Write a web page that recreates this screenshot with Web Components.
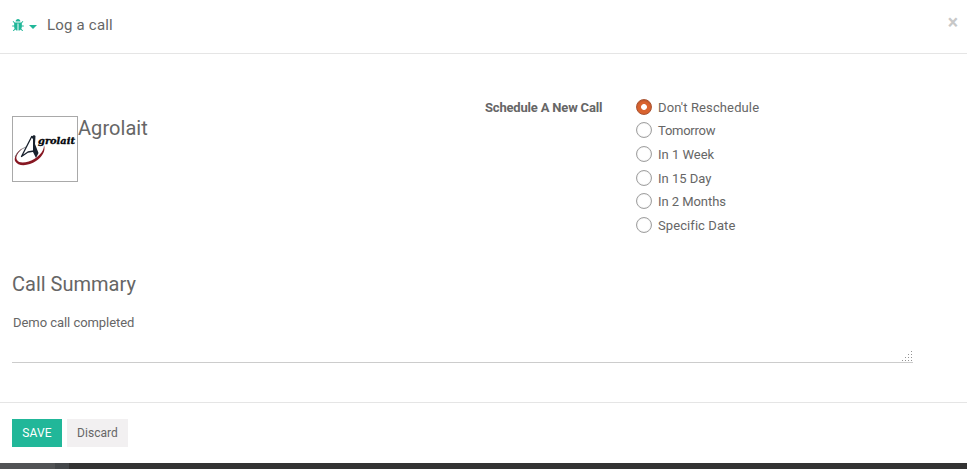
<!DOCTYPE html>
<html lang="en">
<head>
<meta charset="utf-8">
<title>Log a call</title>
<style>
  body { margin:0; height:469px; overflow:hidden; background:#333; color:#666; font:13px/18px Roboto, sans-serif; }
</style>
</head>
<body>
<call-dialog>
  <debug-menu slot="title"></debug-menu>
  <span slot="title">Log a call</span>
  <partner-card slot="left" name="Agrolait"></partner-card>
  <radio-group slot="right" label="Schedule A New Call">
    <radio-option checked style="letter-spacing:.12px">Don't Reschedule</radio-option>
    <radio-option style="letter-spacing:-.25px">Tomorrow</radio-option>
    <radio-option>In 1 Week</radio-option>
    <radio-option>In 15 Day</radio-option>
    <radio-option style="letter-spacing:-.06px">In 2 Months</radio-option>
    <radio-option style="letter-spacing:.08px">Specific Date</radio-option>
  </radio-group>
  <summary-field slot="summary" label="Call Summary">Demo call completed</summary-field>
  <action-button slot="footer" primary style="width:50px">SAVE</action-button>
  <action-button slot="footer" style="width:61px">Discard</action-button>
</call-dialog>
<page-backdrop></page-backdrop>

<script>
function define(name, html, setup) {
  const template = document.createElement('template');
  template.innerHTML = html;
  customElements.define(name, class extends HTMLElement {
    constructor() {
      super();
      this.attachShadow({mode:'open'}).appendChild(template.content.cloneNode(true));
    }
    connectedCallback() { if (setup) setup(this, this.shadowRoot); }
  });
}

// Modal frame: header, two column sheet, footer
define('call-dialog', `<style>
  :host { display:flex; flex-direction:column; height:463px; background:#fff; }
  header { box-sizing:border-box; height:54px; display:flex; justify-content:space-between; padding:15px 9px 0 12px; border-bottom:1px solid #e5e5e5; }
  .title { display:flex; gap:10px; font-size:15px; line-height:20px; letter-spacing:.2px; }
  button { align-self:flex-start; margin:-2px 0 0; padding:0; border:0; background:none; color:#c8c8c8; font:bold 19.5px/20px Roboto, sans-serif; }
  main { flex:1; padding:44px 12px 0; }
  .columns { display:grid; grid-template-columns:473px 1fr; height:174px; }
  footer { box-sizing:border-box; height:61px; display:flex; gap:5px; padding:16px 12px; border-top:1px solid #e5e5e5; }
</style>
<header><div class="title"><slot name="title"></slot></div><button aria-label="Close">×</button></header>
<main>
  <div class="columns"><slot name="left"></slot><slot name="right"></slot></div>
  <slot name="summary"></slot>
</main>
<footer><slot name="footer"></slot></footer>`);

define('debug-menu', `<style>
  :host { display:flex; gap:5px; color:#21b799; }
  svg { display:block; fill:currentColor; }
  .bug { width:12px; height:12px; margin-top:4px; }
  .caret { width:8px; height:4px; margin-top:10px; }
</style>
<svg class="bug" viewBox="32 0 1600 1536" preserveAspectRatio="none"><path d="M1632 896q0 26-19 45t-45 19h-224q0 171-67 290l208 209q19 19 19 45t-19 45q-18 19-45 19t-45-19l-198-197q-5 5-15 13t-42 28.5-65 36.5-82 29-97 13v-896h-128v896q-51 0-101.500-13.500t-87-33-66-39-43.500-32.500l-15-14-183 207q-20 21-48 21-24 0-43-17-19-18-20.500-44.500t15.500-46.500l202-227q-58-114-58-274h-224q-26 0-45-19t-19-45 19-45 45-19h224v-294l-173-173q-19-19-19-45t19-45 45-19 45 19l173 173h844l173-173q19-19 45-19t45 19 19 45-19 45l-173 173v294h224q26 0 45 19t19 45zm-480-576h-640q0-133 93.500-226.500t226.500-93.500 226.500 93.500 93.500 226.500z"/></svg>
<svg class="caret" viewBox="0 0 8 4"><path d="M0 0h8L4 4z"/></svg>`);

define('partner-card', `<style>
  :host { display:flex; align-items:flex-start; padding-top:18px; }
  svg { display:block; width:64px; height:64px; border:1px solid #a9a9a9; background:#fff; }
  h2 { margin:0; font-size:20px; line-height:24px; font-weight:400; letter-spacing:.05px; }
</style>
<svg viewBox="0 0 64 64">
  <path d="M10 31C3 35 1 41 2 44C5 50 16 49 23 44C29 40 33 34 31 28C31 34 27 38 22 41.500C15 46 6 47 4 43C2 40 5 35 10 31Z" fill="#871722"/>
  <path d="M13 30Q5 33 2 40" fill="none" stroke="#64656c" stroke-width=".7"/>
  <path d="M19 19L8.500 39.500L15 35L24 33.500" fill="none" stroke="#18212d" stroke-width="1.3" stroke-linejoin="round"/>
  <path d="M18 20L21 18L22.500 19L22 27L25.500 36L23 41L20 35L20 22Z" fill="#18212d"/>
  <text x="25" y="27" textLength="37" lengthAdjust="spacingAndGlyphs" font-family="DejaVu Serif, serif" font-size="8.5" font-weight="bold" font-style="italic" fill="#05070b" stroke="#05070b" stroke-width=".3">grolait</text>
</svg>
<h2></h2>`, (el, root) => { root.querySelector('h2').textContent = el.getAttribute('name'); });

define('radio-group', `<style>
  :host { display:grid; grid-template-columns:151px 1fr; align-items:start; padding-top:.8px; }
  b { line-height:18px; letter-spacing:-.18px; }
  .options { display:flex; flex-direction:column; }
</style>
<b></b><div class="options"><slot></slot></div>`, (el, root) => { root.querySelector('b').textContent = el.getAttribute('label'); });

define('radio-option', `<style>
  :host { display:flex; align-items:flex-start; gap:6px; height:23.6px; }
  i { box-sizing:border-box; width:16px; height:16px; border:1px solid #a0a0a0; border-radius:50%; background:#fff; box-shadow:inset 0 0 1px #bbb; }
  :host([checked]) i { border-color:#a95432; background:radial-gradient(circle, #fff 0 2.5px, #d9632f 3.3px); box-shadow:inset 0 1px 1px #b9552c; }
</style>
<i></i><span><slot></slot></span>`);

define('summary-field', `<style>
  :host { display:block; width:901px; }
  h2 { margin:0; font-size:20px; line-height:24px; font-weight:400; }
  .box { box-sizing:border-box; height:52px; margin-top:15px; padding:3px 1px 0; display:flex; justify-content:space-between; letter-spacing:-.05px; border-bottom:1px solid #ccc; }
  svg { align-self:flex-end; display:block; width:10px; height:10px; margin-bottom:1px; fill:#929292; }
</style>
<h2></h2>
<div class="box"><span><slot></slot></span>
  <svg viewBox="0 0 10 10" shape-rendering="crispEdges"><path d="M9 0h1v1h-1zM6 3h1v1h-1zM9 3h1v1h-1zM3 6h1v1h-1zM6 6h1v1h-1zM9 6h1v1h-1zM0 9h1v1h-1zM3 9h1v1h-1zM6 9h1v1h-1zM9 9h1v1h-1z"/></svg>
</div>`, (el, root) => { root.querySelector('h2').textContent = el.getAttribute('label'); });

define('action-button', `<style>
  :host { display:block; }
  button { width:100%; height:28px; padding:0; border:0; background:#f2f0f1; color:#666; font:12px/28px Roboto, sans-serif; letter-spacing:.05px; }
  :host([primary]) button { background:#21b799; color:#fff; letter-spacing:.2px; }
</style>
<button><slot></slot></button>`);

// Strip of the page left visible under the dialog
define('page-backdrop', `<style>
  :host { display:flex; height:6px; background:#333; }
  .side { width:55px; background:#515355; }
  .scroll { width:14px; background:#44474a; }
</style>
<div class="side"></div><div class="scroll"></div>`);
</script>
</body>
</html>
